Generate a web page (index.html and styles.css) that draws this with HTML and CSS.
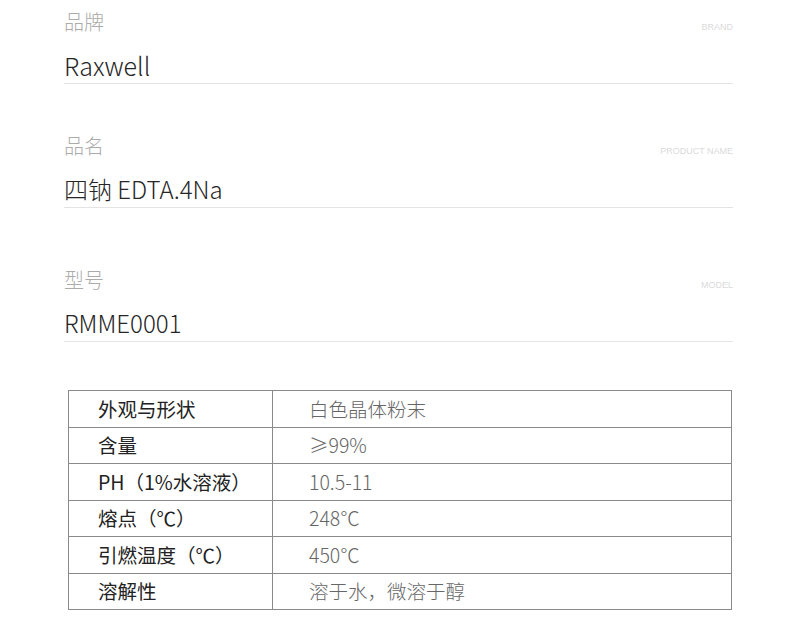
FILE: index.html
```html
<!DOCTYPE html>
<html lang="zh">
<head>
<meta charset="utf-8">
<link rel="stylesheet" href="styles.css">
</head>
<body>
<div class="page">
  <section class="field field-1">
    <div class="field-head"><span class="label">品牌</span><span class="tag">BRAND</span></div>
    <div class="value">Raxwell</div>
  </section>
  <section class="field field-2">
    <div class="field-head"><span class="label">品名</span><span class="tag">PRODUCT NAME</span></div>
    <div class="value">四钠 EDTA.4Na</div>
  </section>
  <section class="field field-3">
    <div class="field-head"><span class="label">型号</span><span class="tag">MODEL</span></div>
    <div class="value">RMME0001</div>
  </section>
  <table class="spec">
    <tr><td class="k">外观与形状</td><td class="v">白色晶体粉末</td></tr>
    <tr><td class="k">含量</td><td class="v">≥99%</td></tr>
    <tr><td class="k">PH（1%水溶液）</td><td class="v">10.5-11</td></tr>
    <tr><td class="k">熔点（℃）</td><td class="v">248℃</td></tr>
    <tr><td class="k">引燃温度（℃）</td><td class="v">450℃</td></tr>
    <tr><td class="k">溶解性</td><td class="v">溶于水，微溶于醇</td></tr>
  </table>
</div>
</body>
</html>
```
FILE: styles.css
```css
html, body {
  margin: 0;
  padding: 0;
  background: #fff;
}
.page {
  width: 790px;
  font-family: "Noto Sans CJK SC", "Noto Sans", sans-serif;
  padding-top: 10px;
}
.field {
  margin-left: 64px;
  width: 669px;
}
.field-2 { margin-top: 50px; }
.field-3 { margin-top: 60px; }
.field-head {
  display: flex;
  justify-content: space-between;
  align-items: flex-end;
  height: 24px;
}
.label {
  font-size: 20px;
  line-height: 24px;
  color: #ababab;
  font-weight: 300;
}
.tag {
  font-family: "Liberation Sans", Arial, sans-serif;
  font-size: 9px;
  line-height: 10px;
  color: #dadada;
  margin-bottom: 2px;
}
.value {
  margin-top: 16px;
  font-size: 25px;
  line-height: 30px;
  padding-bottom: 3px;
  color: #262626;
  font-weight: 300;
  border-bottom: 1px solid #e4e4e4;
}
.field-2 .value, .field-3 .value {
  font-size: 24px;
}
.spec {
  margin: 48px 0 0 68px;
  width: 664px;
  border-collapse: collapse;
  font-size: 19.5px;
}
.spec td {
  border: 1.5px solid #8a8a8a;
  height: 35.5px;
  padding: 0;
  line-height: 24px;
}
.spec .k {
  width: 174px;
  padding-left: 29px;
  color: #222;
}
.spec .v {
  padding-left: 36px;
  color: #666;
  font-weight: 300;
}
```
